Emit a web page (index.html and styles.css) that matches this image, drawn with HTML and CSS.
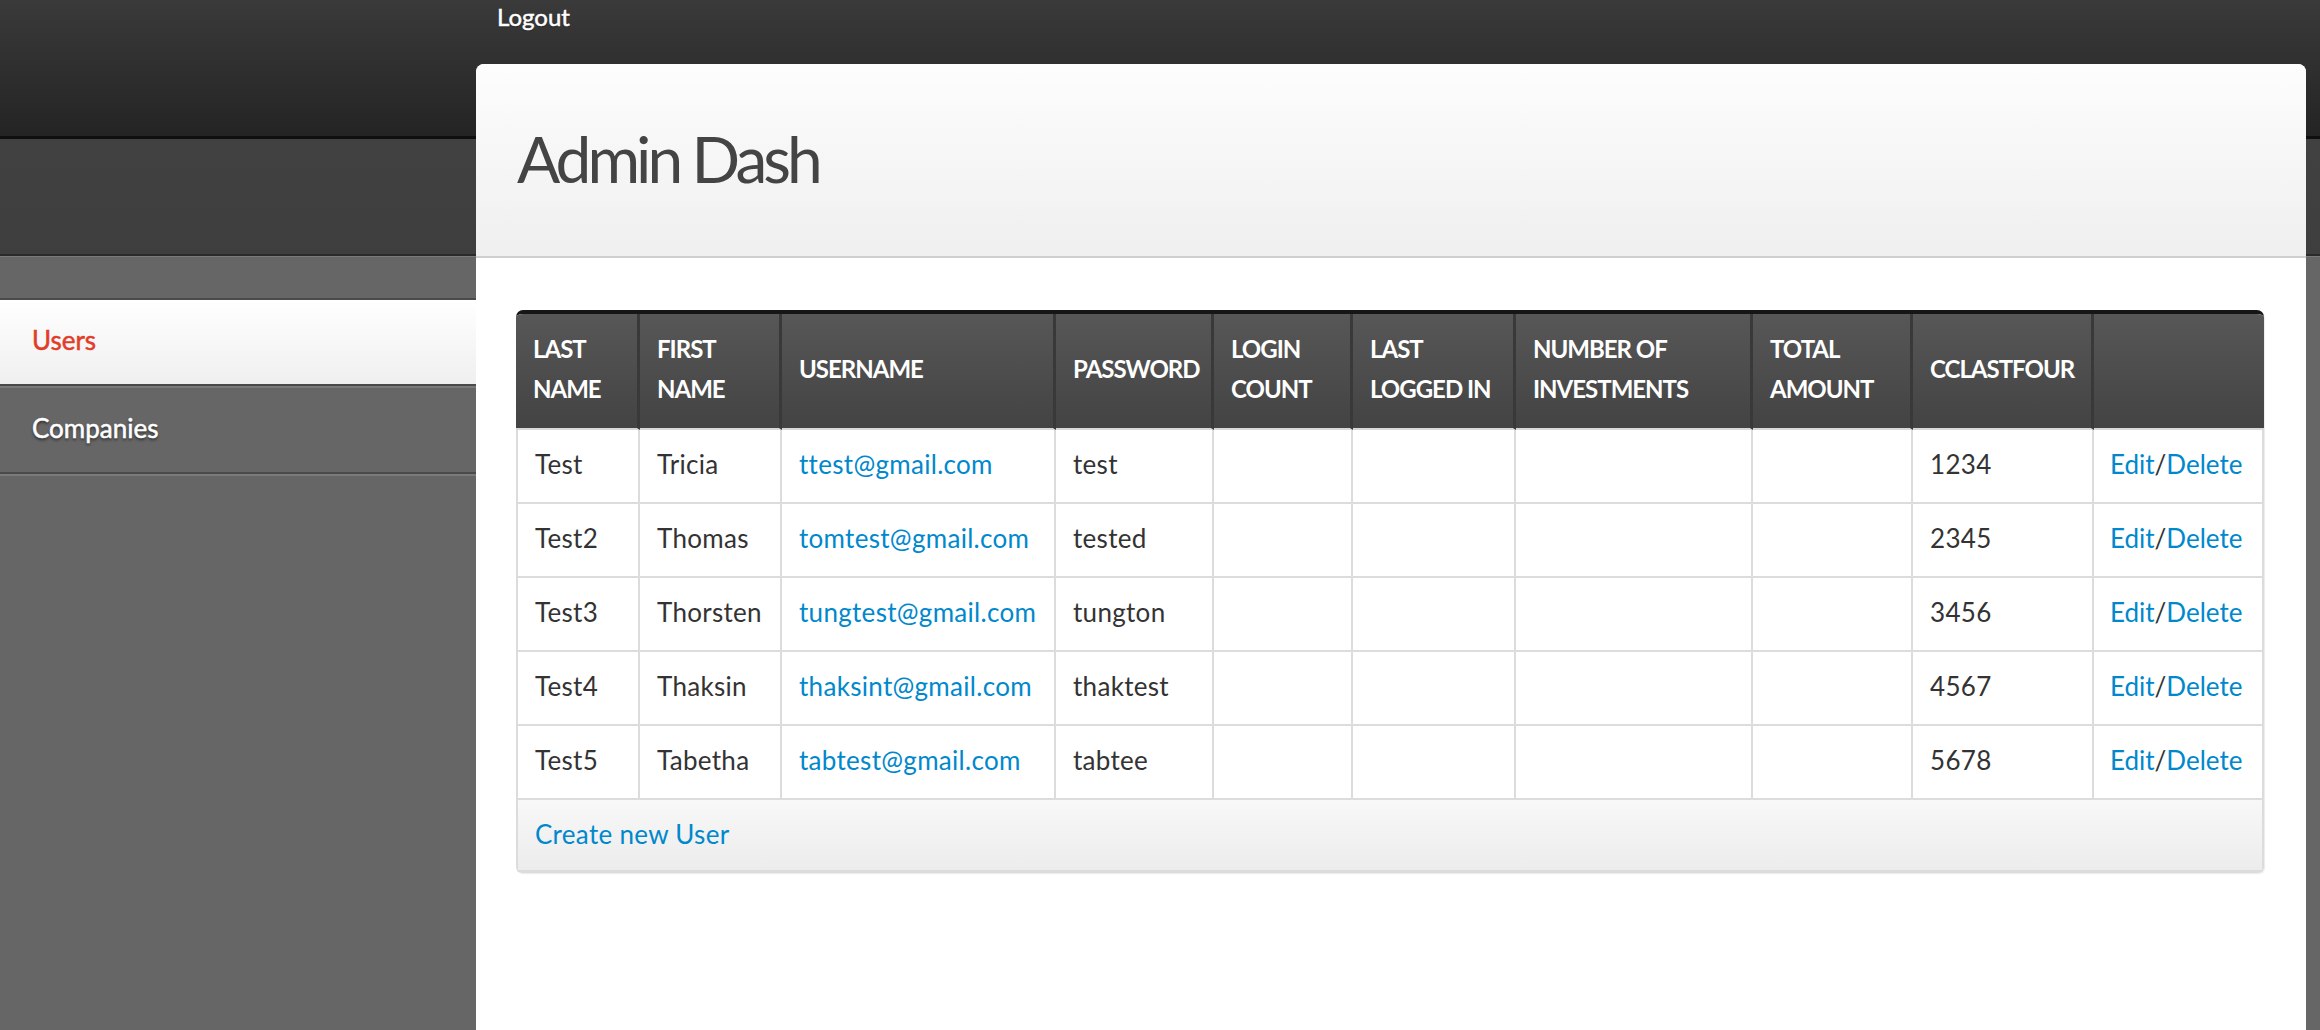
FILE: index.html
```html
<!DOCTYPE html>
<html lang="en">
<head>
<meta charset="utf-8">
<title>Admin Dash</title>
<link rel="stylesheet" href="styles.css">
</head>
<body>
<div class="page">
  <div class="topnav"><a class="logout" href="#">Logout</a></div>
  <aside class="sidebar">
    <ul class="sidenav">
      <li class="active"><a href="#">Users</a></li>
      <li><a href="#">Companies</a></li>
    </ul>
  </aside>
  <main class="panel">
    <header class="panel-head"><h1>Admin Dash</h1></header>
    <section class="panel-body">
      <div class="grid">
        <table>
          <colgroup>
            <col class="c1"><col class="c2"><col class="c3"><col class="c4"><col class="c5">
            <col class="c6"><col class="c7"><col class="c8"><col class="c9"><col class="c10">
          </colgroup>
          <thead>
            <tr>
              <th>Last<br>Name</th>
              <th>First<br>Name</th>
              <th>Username</th>
              <th>Password</th>
              <th>Login<br>Count</th>
              <th>Last<br>Logged in</th>
              <th>Number of<br>Investments</th>
              <th>Total<br>Amount</th>
              <th>CCLastFour</th>
              <th></th>
            </tr>
          </thead>
          <tbody>
            <tr><td>Test</td><td>Tricia</td><td><a href="#">ttest@gmail.com</a></td><td>test</td><td></td><td></td><td></td><td></td><td>1234</td><td><a href="#">Edit</a>/<a href="#">Delete</a></td></tr>
            <tr><td>Test2</td><td>Thomas</td><td><a href="#">tomtest@gmail.com</a></td><td>tested</td><td></td><td></td><td></td><td></td><td>2345</td><td><a href="#">Edit</a>/<a href="#">Delete</a></td></tr>
            <tr><td>Test3</td><td>Thorsten</td><td><a href="#">tungtest@gmail.com</a></td><td>tungton</td><td></td><td></td><td></td><td></td><td>3456</td><td><a href="#">Edit</a>/<a href="#">Delete</a></td></tr>
            <tr><td>Test4</td><td>Thaksin</td><td><a href="#">thaksint@gmail.com</a></td><td>thaktest</td><td></td><td></td><td></td><td></td><td>4567</td><td><a href="#">Edit</a>/<a href="#">Delete</a></td></tr>
            <tr><td>Test5</td><td>Tabetha</td><td><a href="#">tabtest@gmail.com</a></td><td>tabtee</td><td></td><td></td><td></td><td></td><td>5678</td><td><a href="#">Edit</a>/<a href="#">Delete</a></td></tr>
          </tbody>
          <tfoot>
            <tr><td colspan="10"><a href="#">Create new User</a></td></tr>
          </tfoot>
        </table>
      </div>
    </section>
  </main>
</div>
</body>
</html>
```
FILE: styles.css
```css
* { box-sizing: border-box; }
html, body { margin: 0; padding: 0; }
body {
  min-height: 100vh;
  font-family: Lato, "Open Sans", "DejaVu Sans", sans-serif;
  color: #333;
  background-color: #666;
  background-image: linear-gradient(to bottom,
    #3a3a3a 0px, #242424 136px,
    #0f0f0f 136px, #0f0f0f 139px,
    #414141 139px, #3e3e3e 254px,
    #2a2a2a 254px, #2a2a2a 256px,
    #7a7a7a 256px, #7a7a7a 257px,
    #666 257px, #666 100%);
  background-repeat: no-repeat;
}
a { text-decoration: none; color: #0088cc; }

.page {
  display: grid;
  grid-template-columns: 476px 1fr 14px;
  grid-template-rows: 64px auto;
  min-height: 100vh;
}

.topnav {
  grid-column: 2;
  grid-row: 1;
  padding: 2px 0 0 21px;
}
.logout {
  color: #fff;
  font-size: 24px;
  line-height: 29px;
  -webkit-text-stroke: 0.5px #fff;
  text-shadow: 0 1px 1px rgba(0,0,0,0.4);
}

.sidebar {
  grid-column: 1;
  grid-row: 2;
  padding-top: 234px;
}
.sidenav {
  list-style: none;
  margin: 0;
  padding: 0;
  border-bottom: 2px solid #7a7a7a;
}
.sidenav li {
  border-bottom: 2px solid #4b4b4b;
}
.sidenav li:first-child { border-top: 2px solid #4b4b4b; }
.sidenav li + li { border-top: 2px solid #7a7a7a; }
.sidenav a {
  display: block;
  font-size: 26px;
  line-height: 40px;
  padding: 20px 0 24px 32px;
  color: #fff;
  -webkit-text-stroke: 0.5px #fff;
  text-shadow: 0 2px 3px rgba(0,0,0,0.6);
}
.sidenav li.active {
  background: linear-gradient(to bottom, #ffffff, #efefef);
}
.sidenav li.active a {
  color: #e23b28;
  -webkit-text-stroke: 0.5px #e23b28;
  text-shadow: none;
}

.panel {
  grid-column: 2;
  grid-row: 2;
  background: #fff;
  border-radius: 8px 8px 0 0;
}
.panel-head {
  height: 194px;
  padding: 55px 0 0 41px;
  background: linear-gradient(to bottom, #fdfdfd, #efefef);
  border-bottom: 2px solid #cfcfcf;
  border-radius: 8px 8px 0 0;
}
.panel-head h1 {
  margin: 0;
  font-size: 64px;
  line-height: 80px;
  font-weight: normal;
  color: #444;
  letter-spacing: -4px;
}

.panel-body {
  padding: 52px 42px 40px 40px;
}
.grid {
  border-top: 4px solid #161616;
  border-radius: 7px 7px 6px 6px;
  overflow: hidden;
  box-shadow: 1px 1px 1px rgba(0,0,0,0.08);
}
table {
  width: 100%;
  border-collapse: separate;
  border-spacing: 0;
  table-layout: fixed;
  font-size: 26px;
}
col.c1 { width: 124px; }
col.c2 { width: 142px; }
col.c3 { width: 274px; }
col.c4 { width: 158px; }
col.c5 { width: 139px; }
col.c6 { width: 163px; }
col.c7 { width: 237px; }
col.c8 { width: 160px; }
col.c9 { width: 181px; }
col.c10 { width: 170px; }

th {
  background: linear-gradient(to bottom, #575757, #434343);
  color: #fff;
  font-size: 24px;
  font-weight: bold;
  text-transform: uppercase;
  text-align: left;
  line-height: 40px;
  padding: 15px 8px 19px 17px;
  border-right: 3px solid #393939;
  border-bottom: 2px solid #d8d8d8;
  white-space: nowrap;
  letter-spacing: -1px;
  vertical-align: middle;
}
th:last-child { border-right: none; }

td {
  line-height: 40px;
  padding: 14px 8px 18px 17px;
  border-right: 2px solid #dcdcdc;
  border-bottom: 2px solid #dcdcdc;
  color: #333;
  white-space: nowrap;
  letter-spacing: 0.3px;
  vertical-align: middle;
}
tbody td:first-child { border-left: 2px solid #dcdcdc; }
tbody td:last-child { padding-left: 16px; letter-spacing: 0; }

tfoot td {
  padding: 14px 17px 16px 17px;
  border-left: 2px solid #dcdcdc;
  border-bottom: 3px solid #dcdcdc;
  background: linear-gradient(to bottom, #f8f8f8, #ececec);
}
```
